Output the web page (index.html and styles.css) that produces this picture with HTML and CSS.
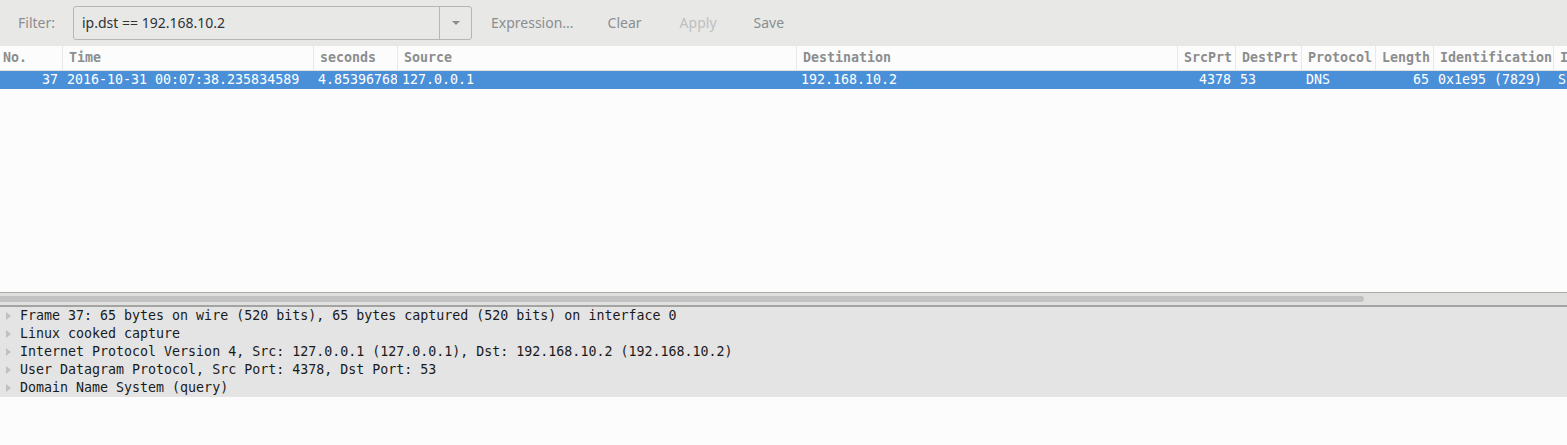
FILE: index.html
```html
<!DOCTYPE html>
<html>
<head>
<meta charset="utf-8">
<link rel="stylesheet" href="styles.css">
</head>
<body>
<div class="app">
  <div class="toolbar">
    <span class="label">Filter:</span>
    <div class="combo">
      <div class="entry">ip.dst == 192.168.10.2</div>
      <div class="drop"><span class="arrow"></span></div>
    </div>
    <span class="tbtn expr">Expression...</span>
    <span class="tbtn clear">Clear</span>
    <span class="tbtn apply disabled">Apply</span>
    <span class="tbtn save">Save</span>
  </div>

  <div class="list">
    <div class="header">
      <div class="c c-no">No.</div>
      <div class="c c-time">Time</div>
      <div class="c c-sec">seconds</div>
      <div class="c c-src">Source</div>
      <div class="c c-dst">Destination</div>
      <div class="c c-sp">SrcPrt</div>
      <div class="c c-dp">DestPrt</div>
      <div class="c c-proto">Protocol</div>
      <div class="c c-len">Length</div>
      <div class="c c-id">Identification</div>
      <div class="c c-info">Info</div>
    </div>
    <div class="row selected">
      <div class="c c-no right">37</div>
      <div class="c c-time">2016-10-31 00:07:38.235834589</div>
      <div class="c c-sec">4.85396768</div>
      <div class="c c-src">127.0.0.1</div>
      <div class="c c-dst">192.168.10.2</div>
      <div class="c c-sp right">4378</div>
      <div class="c c-dp">53</div>
      <div class="c c-proto">DNS</div>
      <div class="c c-len right">65</div>
      <div class="c c-id">0x1e95 (7829)</div>
      <div class="c c-info">Standard query</div>
    </div>
  </div>

  <div class="hscroll"><div class="thumb"></div></div>

  <div class="details">
    <div class="drow"><span class="tri"></span>Frame 37: 65 bytes on wire (520 bits), 65 bytes captured (520 bits) on interface 0</div>
    <div class="drow"><span class="tri"></span>Linux cooked capture</div>
    <div class="drow"><span class="tri"></span>Internet Protocol Version 4, Src: 127.0.0.1 (127.0.0.1), Dst: 192.168.10.2 (192.168.10.2)</div>
    <div class="drow"><span class="tri"></span>User Datagram Protocol, Src Port: 4378, Dst Port: 53</div>
    <div class="drow"><span class="tri"></span>Domain Name System (query)</div>
  </div>
  <div class="bottom"></div>
</div>
</body>
</html>
```
FILE: styles.css
```css
html, body {
  margin: 0;
  padding: 0;
  background: #fcfcfc;
  overflow: hidden;
}
.app {
  width: 1567px;
  height: 445px;
  display: flex;
  flex-direction: column;
}
.toolbar {
  height: 46px;
  background: #e8e8e7;
  display: flex;
  align-items: center;
  font-family: "Noto Sans", "Open Sans", sans-serif;
  font-size: 14px;
  color: #2e3436;
  box-sizing: border-box;
  padding-bottom: 1px;
}
.label {
  color: #8b8e8f;
  margin-left: 18px;
  width: 55px;
}
.combo {
  display: flex;
  height: 34px;
  width: 399px;
}
.entry {
  flex: 1;
  border: 1px solid #b6b6b3;
  border-radius: 3px 0 0 3px;
  background: #e8e8e7;
  display: flex;
  align-items: center;
  padding-left: 8px;
  color: #2e3436;
}
.drop {
  width: 31px;
  border: 1px solid #b6b6b3;
  margin-left: -1px;
  border-radius: 0 3px 3px 0;
  display: flex;
  align-items: center;
  justify-content: center;
}
.arrow {
  width: 0;
  height: 0;
  border-left: 4px solid transparent;
  border-right: 4px solid transparent;
  border-top: 4px solid #8b8e8f;
  margin-left: 1px;
}
.tbtn {
  color: #8b8e8f;
}
.expr { margin-left: 19px; }
.clear { margin-left: 34px; }
.apply { margin-left: 38px; }
.save { margin-left: 37px; }
.disabled { color: #bfc0bf; }

.list {
  height: 246px;
  background: #fcfcfc;
  font-family: "DejaVu Sans Mono", monospace;
  font-size: 13.3px;
  overflow: hidden;
}
.header {
  display: flex;
  height: 24px;
  border-bottom: 1px solid #e1e1e0;
  color: #8b8e8f;
  font-weight: bold;
  white-space: nowrap;
}
.header .c {
  border-left: 1px solid #e8e8e7;
  line-height: 23px;
  padding-left: 6px;
}
.header .c-no {
  border-left: none;
  padding-left: 3px;
}
.row {
  display: flex;
  height: 18px;
  line-height: 18px;
  white-space: nowrap;
}
.row.selected {
  background: #4a90d9;
  color: #ffffff;
}
.c {
  box-sizing: border-box;
  overflow: hidden;
  flex: none;
}
.row .c {
  padding-left: 5px;
  padding-right: 4px;
}
.row .c-sec { padding-right: 0; }
.right { text-align: right; }
.c-no { width: 62px; }
.c-time { width: 251px; }
.c-sec { width: 84px; }
.c-src { width: 399px; }
.c-dst { width: 381px; }
.c-sp { width: 58px; }
.c-dp { width: 66px; }
.c-proto { width: 74px; }
.c-len { width: 58px; }
.c-id { width: 120px; }
.c-info { width: 300px; }

.hscroll {
  height: 12px;
  border-top: 1px solid #a8a8a5;
  border-bottom: 2px solid #a4a4a2;
  background: #e0e0de;
  display: flex;
  align-items: center;
}
.thumb {
  width: 1364px;
  height: 6px;
  background: #c1c2c1;
  border-radius: 0 3px 3px 0;
  margin-top: -1px;
}
.details {
  background: #e4e4e4;
  font-family: "DejaVu Sans Mono", monospace;
  font-size: 13.3px;
  color: #1a1a1a;
}
.drow {
  height: 18px;
  line-height: 18px;
  display: flex;
  align-items: center;
  white-space: nowrap;
}
.tri {
  width: 0;
  height: 0;
  border-top: 4.5px solid transparent;
  border-bottom: 4.5px solid transparent;
  border-left: 5px solid #c0c0c0;
  margin-left: 6px;
  margin-right: 9px;
}
.bottom {
  flex: 1;
  background: #fcfcfc;
}
```
